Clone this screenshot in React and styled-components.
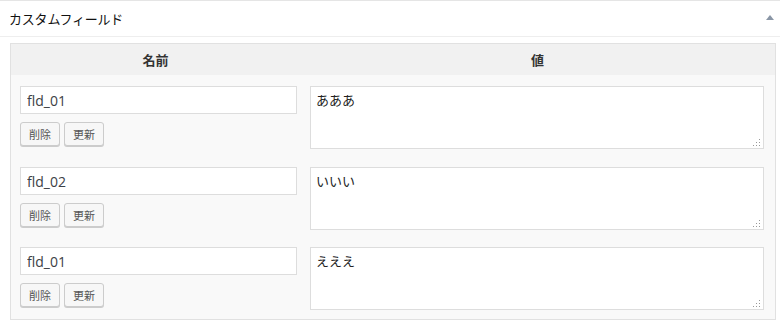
import React from "react";
import styled, { createGlobalStyle } from "styled-components";

const GlobalStyle = createGlobalStyle`
  body {
    margin: 0;
    background: #fff;
    font-family: "Open Sans", "Noto Sans CJK JP", sans-serif;
    color: #333;
  }
`;

const Panel = styled.div`
  width: 780px;
  background: #fff;
  border-top: 1px solid #e5e5e5;
  padding-bottom: 12px;
`;

const PanelHeader = styled.div`
  height: 35px;
  display: flex;
  align-items: center;
  justify-content: space-between;
  padding: 0 6px 0 9px;
  border-bottom: 1px solid #eee;
`;

const Title = styled.h2`
  margin: 0;
  font-size: 13px;
  font-weight: 400;
  color: #111;
  font-family: "Noto Sans CJK JP", sans-serif;
  letter-spacing: -0.2px;
`;

const Toggle = styled.span`
  width: 0;
  height: 0;
  border-left: 4px solid transparent;
  border-right: 4px solid transparent;
  border-bottom: 5px solid #8a96a6;
  margin-top: -2px;
`;

const Table = styled.div`
  margin: 6px 0 0 10px;
  width: 766px;
  box-sizing: border-box;
  border: 1px solid #e1e1e1;
  background: #f9f9f9;
`;

const Grid = styled.div`
  display: grid;
  grid-template-columns: 289px 1fr;
`;

const HeadCell = styled.div`
  height: 31px;
  background: #f1f1f1;
  display: flex;
  align-items: center;
  justify-content: center;
  font-family: "Noto Sans CJK JP", sans-serif;
  font-size: 13px;
  font-weight: 700;
  color: #333;
`;

const KeyCell = styled.div`
  padding: ${({ $pb }) => `11px 0 ${$pb}px 9px`};
  display: flex;
  flex-direction: column;
  gap: 8px;
`;

const ValueCell = styled.div`
  padding: ${({ $pb }) => `11px 11px ${$pb}px 10px`};
`;

const KeyInput = styled.input`
  width: 277px;
  height: 28px;
  box-sizing: border-box;
  border: 1px solid #ddd;
  background: #fff;
  padding: 0 6px;
  font-family: "Open Sans", sans-serif;
  font-size: 14px;
  color: #3c4146;
  outline: none;
`;

const Buttons = styled.div`
  display: flex;
  gap: 4px;
`;

const SmallButton = styled.button`
  height: 24px;
  padding: 0 8px;
  box-sizing: border-box;
  border: 1px solid #ccc;
  border-radius: 3px;
  background: #f7f7f7;
  box-shadow: 0 1px 0 #ccc;
  font-family: "Noto Sans CJK JP", sans-serif;
  font-size: 11px;
  color: #555;
  cursor: pointer;
`;

const AreaWrap = styled.div`
  position: relative;
  height: 63px;
`;

const ValueArea = styled.textarea`
  display: block;
  width: 100%;
  height: 63px;
  box-sizing: border-box;
  border: 1px solid #ddd;
  background: #fff;
  padding: 3px 5px;
  resize: none;
  font-family: "Noto Sans CJK JP", sans-serif;
  font-size: 13px;
  color: #222;
  outline: none;
`;

const Grip = styled.svg`
  position: absolute;
  right: 4px;
  bottom: 3px;
  width: 7px;
  height: 7px;
`;

const rows = [
  { key: "fld_01", value: "あああ", pb: 7 },
  { key: "fld_02", value: "いいい", pb: 6 },
  { key: "fld_01", value: "えええ", pb: 9 },
];

function ResizeGrip() {
  const dots = [
    [6, 0],
    [3, 3],
    [6, 3],
    [0, 6],
    [3, 6],
    [6, 6],
  ];
  return (
    <Grip viewBox="0 0 7 7">
      {dots.map(([x, y], i) => (
        <rect key={i} x={x} y={y} width="1" height="1" fill="#999" />
      ))}
    </Grip>
  );
}

export default function App() {
  return (
    <>
      <GlobalStyle />
      <Panel>
        <PanelHeader>
          <Title>カスタムフィールド</Title>
          <Toggle />
        </PanelHeader>
        <Table>
          <Grid>
            <HeadCell>名前</HeadCell>
            <HeadCell>値</HeadCell>
            {rows.map((row, i) => (
              <React.Fragment key={i}>
                <KeyCell $pb={row.pb}>
                  <KeyInput defaultValue={row.key} />
                  <Buttons>
                    <SmallButton>削除</SmallButton>
                    <SmallButton>更新</SmallButton>
                  </Buttons>
                </KeyCell>
                <ValueCell $pb={row.pb}>
                  <AreaWrap>
                    <ValueArea defaultValue={row.value} />
                    <ResizeGrip />
                  </AreaWrap>
                </ValueCell>
              </React.Fragment>
            ))}
          </Grid>
        </Table>
      </Panel>
    </>
  );
}
